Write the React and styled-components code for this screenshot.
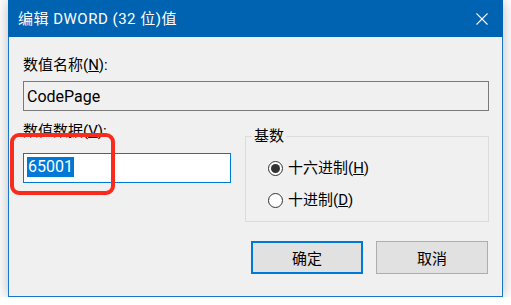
import React from "react";
import styled, { createGlobalStyle } from "styled-components";

const GlobalStyle = createGlobalStyle`
  html, body {
    margin: 0;
    padding: 0;
    background: #ffffff;
  }
  body {
    font-family: Roboto, "Noto Sans CJK SC", sans-serif;
    overflow: hidden;
  }
`;

const Window = styled.div`
  width: 495px;
  height: 297px;
  margin-left: 8px;
  box-sizing: border-box;
  background: #f0f0f0;
  border: 1px solid #1a76c9;
  border-top: 0;
  box-shadow: 0 0 14px rgba(0, 0, 0, 0.28);
  display: flex;
  flex-direction: column;
`;

const TitleBar = styled.div`
  height: 37px;
  flex-shrink: 0;
  background: #0063b1;
  color: #ffffff;
  display: flex;
  align-items: center;
  justify-content: space-between;
  padding: 0 15px 0 10px;
  font-size: 15px;
  margin: 0 -1px;
`;

const TitleText = styled.span`
  line-height: 20px;
  padding-top: 1px;
  letter-spacing: 0.5px;
`;

const CloseButton = styled.svg`
  width: 12px;
  height: 12px;
  display: block;
`;

const Body = styled.div`
  padding: 18px 13px 0 14px;
  font-size: 15px;
  color: #000000;
`;

const Label = styled.div`
  line-height: 20px;
  height: 20px;
  white-space: nowrap;
`;

const TextBox = styled.div`
  box-sizing: border-box;
  height: 30px;
  margin-top: ${(p) => p.$gap}px;
  border: 1px solid ${(p) => (p.$focused ? "#0078d7" : "#7a7a7a")};
  background: ${(p) => (p.$readOnly ? "#f0f0f0" : "#ffffff")};
  display: flex;
  align-items: center;
  padding-left: 3px;
  font-size: 16px;
`;

const Selection = styled.span`
  background: #0078d7;
  color: #ffffff;
  line-height: 20px;
  padding: 0 1px;
  margin-top: -2px;
`;

const Row = styled.div`
  display: grid;
  grid-template-columns: 208px 1fr;
  column-gap: 14px;
  align-items: start;
  margin-top: 10px;
`;

const LeftColumn = styled.div`
  position: relative;
`;

const Highlight = styled.div`
  position: absolute;
  left: -13px;
  top: 12px;
  width: 105px;
  height: 62px;
  box-sizing: border-box;
  border: 4px solid #fa2a1c;
  border-radius: 9px;
  pointer-events: none;
`;

const Group = styled.fieldset`
  margin: 5px 0 0 0;
  padding: 0 0 9px 0;
  border: 1px solid #dcdcdc;
  min-width: 0;
`;

const Legend = styled.legend`
  padding: 0 2px;
  margin-left: 6px;
  line-height: 20px;
`;

const Options = styled.div`
  display: flex;
  flex-direction: column;
  gap: 8px;
  padding: 10px 0 0 22px;
`;

const Option = styled.label`
  display: flex;
  align-items: center;
  height: 24px;
  gap: 5px;
  line-height: 20px;
`;

const RadioMark = styled.span`
  width: 15px;
  height: 15px;
  box-sizing: border-box;
  border-radius: 50%;
  border: 1px solid #333333;
  background: #ffffff;
  display: flex;
  align-items: center;
  justify-content: center;

  &::after {
    content: "";
    width: 9px;
    height: 9px;
    border-radius: 50%;
    background: #333333;
    display: ${(p) => (p.$checked ? "block" : "none")};
  }
`;

const ButtonRow = styled.div`
  display: flex;
  justify-content: flex-end;
  gap: 13px;
  margin-top: 19px;
  padding-right: 1px;
`;

const Button = styled.div`
  width: 112px;
  height: 33px;
  box-sizing: border-box;
  background: #e1e1e1;
  border: ${(p) => (p.$primary ? "2px solid #0078d7" : "1px solid #adadad")};
  display: flex;
  align-items: center;
  justify-content: center;
  font-size: 15px;
`;

export default function App() {
  return (
    <>
      <GlobalStyle />
      <Window>
        <TitleBar>
          <TitleText>编辑 DWORD (32 位)值</TitleText>
          <CloseButton viewBox="0 0 12 12">
            <path d="M0.5 0.5 L11.5 11.5 M11.5 0.5 L0.5 11.5" stroke="#ffffff" strokeWidth="1.1" fill="none" />
          </CloseButton>
        </TitleBar>
        <Body>
          <Label>
            数值名称(<u>N</u>):
          </Label>
          <TextBox $readOnly $gap={6}>CodePage</TextBox>
          <Row>
            <LeftColumn>
              <Label>
                数值数据(<u>V</u>):
              </Label>
              <TextBox $focused $gap={12}>
                <Selection>65001</Selection>
              </TextBox>
              <Highlight />
            </LeftColumn>
            <Group>
              <Legend>基数</Legend>
              <Options>
                <Option>
                  <RadioMark $checked />
                  <span>
                    十六进制(<u>H</u>)
                  </span>
                </Option>
                <Option>
                  <RadioMark />
                  <span>
                    十进制(<u>D</u>)
                  </span>
                </Option>
              </Options>
            </Group>
          </Row>
          <ButtonRow>
            <Button $primary>确定</Button>
            <Button>取消</Button>
          </ButtonRow>
        </Body>
      </Window>
    </>
  );
}
